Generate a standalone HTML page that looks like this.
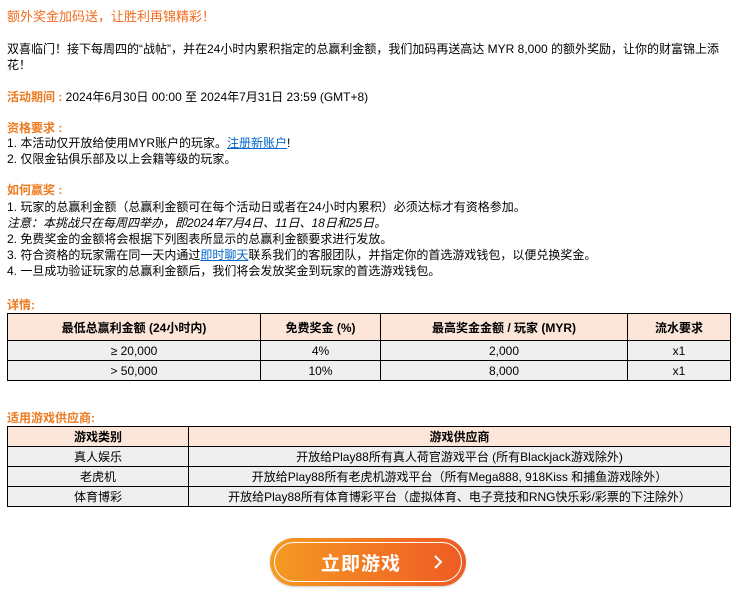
<!DOCTYPE html><html><head><meta charset="utf-8"><style>
body{margin:0;background:#fff;font-family:"Liberation Sans","Noto Sans CJK SC",sans-serif;font-size:12px;color:#000;}
.w{position:absolute;left:7px;top:0;width:724px}
.l{position:absolute;left:0;white-space:nowrap;line-height:16px}
.h{color:#ec7a1f;font-weight:bold}
a{color:#0066cc;text-decoration:underline}
table{position:absolute;left:0;width:724px;border-collapse:collapse;font-size:12px}
td,th{border:1px solid #000;text-align:center;padding:0;height:19px;background:#efefef}
th{background:#fbe6d9;font-weight:bold}
.btn{position:absolute;left:270px;top:538px;width:196px;height:48px;border-radius:24px;background:linear-gradient(90deg,#f59a22,#ef5a24);box-shadow:0 1px 2px rgba(0,0,0,.2)}
.btn .in{position:absolute;left:4px;top:4px;right:4px;bottom:4px;border:1.5px solid #fff;border-radius:20px}
.btn .t{position:absolute;left:51px;top:11px;color:#fff;font-size:19px;font-weight:bold;letter-spacing:1px}
</style></head><body><div class="w">
<div class="l" style="top:9px;color:#f26b1d;font-size:13px">额外奖金加码送，让胜利再锦精彩！</div>
<div class="l" style="top:41px">双喜临门！接下每周四的“战帖”，并在24小时内累积指定的总赢利金额，我们加码再送高达 MYR 8,000 的额外奖励，让你的财富锦上添</div>
<div class="l" style="top:57px">花！</div>
<div class="l" style="top:89px"><span class="h">活动期间 :</span> 2024年6月30日 00:00 至 2024年7月31日 23:59 (GMT+8)</div>
<div class="l h" style="top:120px">资格要求 :</div>
<div class="l" style="top:135px">1. 本活动仅开放给使用MYR账户的玩家。<a>注册新账户</a>!</div>
<div class="l" style="top:151px">2. 仅限金钻俱乐部及以上会籍等级的玩家。</div>
<div class="l h" style="top:182px">如何赢奖 :</div>
<div class="l" style="top:199px">1. 玩家的总赢利金额（总赢利金额可在每个活动日或者在24小时内累积）必须达标才有资格参加。</div>
<div class="l" style="top:215px;font-style:italic">注意：本挑战只在每周四举办，即2024年7月4日、11日、18日和25日。</div>
<div class="l" style="top:231px">2. 免费奖金的金额将会根据下列图表所显示的总赢利金额要求进行发放。</div>
<div class="l" style="top:247px">3. 符合资格的玩家需在同一天内通过<a>即时聊天</a>联系我们的客服团队，并指定你的首选游戏钱包，以便兑换奖金。</div>
<div class="l" style="top:263px">4. 一旦成功验证玩家的总赢利金额后，我们将会发放奖金到玩家的首选游戏钱包。</div>
<div class="l h" style="top:297px">详情:</div>
<table style="top:313px"><tr><th style="width:252px;height:26px">最低总赢利金额 (24小时内)</th><th style="width:119px">免费奖金 (%)</th><th style="width:246px">最高奖金金额 / 玩家 (MYR)</th><th>流水要求</th></tr>
<tr><td>≥ 20,000</td><td>4%</td><td>2,000</td><td>x1</td></tr>
<tr><td>&gt; 50,000</td><td>10%</td><td>8,000</td><td>x1</td></tr></table>
<div class="l h" style="top:410px">适用游戏供应商:</div>
<table style="top:426px"><tr><th style="width:180px">游戏类别</th><th>游戏供应商</th></tr>
<tr><td>真人娱乐</td><td>开放给Play88所有真人荷官游戏平台 (所有Blackjack游戏除外)</td></tr>
<tr><td>老虎机</td><td>开放给Play88所有老虎机游戏平台（所有Mega888, 918Kiss 和捕鱼游戏除外）</td></tr>
<tr><td>体育博彩</td><td>开放给Play88所有体育博彩平台（虚拟体育、电子竞技和RNG快乐彩/彩票的下注除外）</td></tr></table>
</div>
<div class="btn"><div class="in"></div><div class="t">立即游戏</div>
<svg style="position:absolute;left:162px;top:16px" width="12" height="16"><path d="M3 2 L9 8 L3 14" stroke="#fff" stroke-width="2" fill="none"/></svg></div>
</body></html>
